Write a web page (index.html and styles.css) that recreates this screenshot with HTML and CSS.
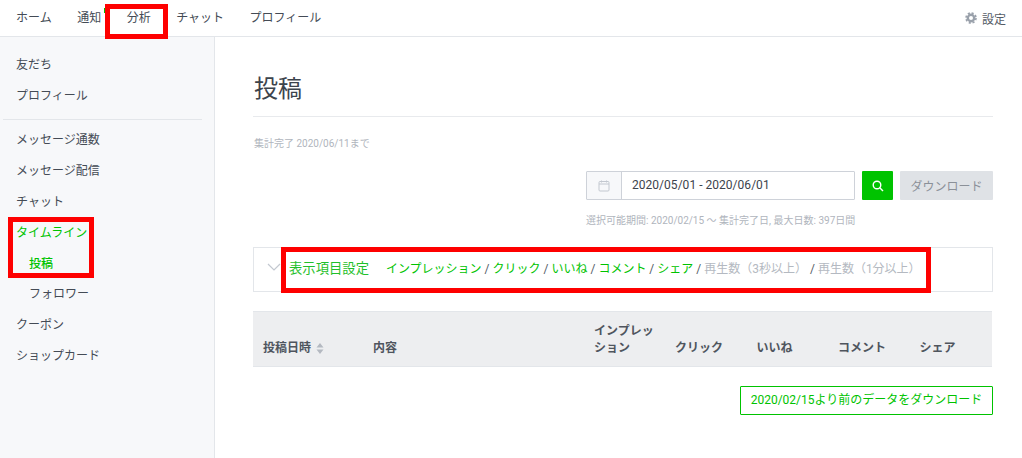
FILE: index.html
```html
<!DOCTYPE html>
<html lang="ja">
<head>
<meta charset="utf-8">
<title>投稿</title>
<link rel="stylesheet" href="styles.css">
</head>
<body>
<header class="topbar">
  <nav class="topnav">
    <a class="topnav-item">ホーム</a>
    <a class="topnav-item has-badge">通知<span class="badge"></span></a>
    <a class="topnav-item">分析</a>
    <a class="topnav-item">チャット</a>
    <a class="topnav-item">プロフィール</a>
  </nav>
  <a class="settings">
    <svg class="gear" viewBox="0 0 12 12" width="12" height="12" fill="none" stroke="#9aa1ab"><circle cx="6" cy="6" r="3.200" stroke-width="2.400"/><circle cx="6" cy="6" r="5" stroke-width="1.600" stroke-dasharray="2.130 1.797"/></svg>
    <span>設定</span>
  </a>
</header>
<div class="layout">
  <aside class="sidebar">
    <ul class="side-group side-first">
      <li class="side-item">友だち</li>
      <li class="side-item">プロフィール</li>
    </ul>
    <ul class="side-group">
      <li class="side-item">メッセージ通数</li>
      <li class="side-item">メッセージ配信</li>
      <li class="side-item">チャット</li>
      <li class="side-item active">タイムライン</li>
      <li class="side-item sub active strong">投稿</li>
      <li class="side-item sub">フォロワー</li>
      <li class="side-item">クーポン</li>
      <li class="side-item">ショップカード</li>
    </ul>
  </aside>
  <main class="main">
    <h1 class="title">投稿</h1>
    <p class="note">集計完了 2020/06/11まで</p>
    <div class="filter">
      <div class="date-group">
        <span class="date-icon">
          <svg viewBox="0 0 12 12" width="12" height="12" fill="none" stroke="#c3c8d0"><rect x="1" y="1.500" width="10" height="9.500" rx="1"/><path d="M1 4h10M3.500 .5v2M8.500 .5v2"/></svg>
        </span>
        <span class="date-value">2020/05/01 - 2020/06/01</span>
      </div>
      <button class="search-btn" aria-label="検索">
        <svg viewBox="0 0 12 12" width="12" height="12" fill="none" stroke="#fff" stroke-width="1.400"><circle cx="5" cy="5" r="3.800"/><path d="M7.800 7.800 11 11"/></svg>
      </button>
      <button class="download-btn">ダウンロード</button>
    </div>
    <p class="range">選択可能期間: 2020/02/15 〜 集計完了日, 最大日数: 397日間</p>
    <section class="columns">
      <svg class="chevron" viewBox="0 0 14 8" width="14" height="8" fill="none" stroke="#c3c8d0" stroke-width="1.200"><path d="M1 1l6 6 6-6"/></svg>
      <span class="columns-title">表示項目設定</span>
      <span class="columns-list"><span class="on">インプレッション</span> / <span class="on">クリック</span> / <span class="on">いいね</span> / <span class="on">コメント</span> / <span class="on">シェア</span> / <span class="off">再生数（3秒以上）</span> / <span class="off">再生数（1分以上）</span></span>
    </section>
    <div class="table-head">
      <div class="th th-date">投稿日時
        <svg class="sort" viewBox="0 0 8 11" width="8" height="11" fill="#b4b9c1"><path d="M4 0l3.500 4.500h-7zM4 11L.5 6.500h7z"/></svg>
      </div>
      <div class="th th-content">内容</div>
      <div class="th th-imp">インプレッション</div>
      <div class="th th-num">クリック</div>
      <div class="th th-num">いいね</div>
      <div class="th th-num">コメント</div>
      <div class="th th-num">シェア</div>
    </div>
    <div class="table-foot">
      <a class="old-data">2020/02/15より前のデータをダウンロード</a>
    </div>
  </main>
</div>
<div class="mark mark-tab"></div>
<div class="mark mark-side"></div>
<div class="mark mark-cols"></div>
</body>
</html>
```
FILE: styles.css
```css
* { box-sizing: border-box; }
html, body { height: 100%; }
body {
  margin: 0;
  position: relative;
  overflow: hidden;
  background: #fff;
  color: #444b55;
  font-family: Roboto, "Noto Sans CJK JP", sans-serif;
  font-size: 12px;
}
ul { list-style: none; margin: 0; padding: 0; }
p, h1 { margin: 0; }
.topbar {
  height: 37px;
  border-bottom: 1px solid #e3e6ea;
  display: flex;
  align-items: center;
  justify-content: space-between;
  padding: 0 16px;
}
.topnav { display: flex; gap: 25.5px; }
.topnav-item { line-height: 36px; }
.has-badge { position: relative; }
.badge {
  position: absolute;
  left: 26.500px;
  top: 8px;
  width: 6px;
  height: 5px;
  background: #00c300;
}
.settings { display: flex; align-items: center; gap: 5px; color: #555c66; }
.gear { display: block; }
.layout { display: flex; height: 421px; }
.sidebar {
  width: 215px;
  flex: none;
  background: #f7f8fa;
  border-right: 1px solid #e3e6ea;
  padding: 0 12px 0 3px;
}
.side-first { padding: 13px 0 7px; border-bottom: 1px solid #e3e6ea; }
.side-group:not(.side-first) { padding-top: 5px; }
.side-item { height: 31px; line-height: 31px; padding-left: 13px; }
.side-item.sub { padding-left: 26px; }
.side-item.strong { height: 30px; }
.active { color: #00c300; }
.strong { font-weight: 500; }
.main { flex: 1; padding: 0 29px 0 38px; min-width: 0; }
.title {
  height: 80px;
  padding: 33px 0 0 1px;
  border-bottom: 1px solid #e8eaed;
  font-size: 24px;
  font-weight: 400;
  line-height: 38px;
  color: #3c434c;
}
.note { margin-top: 20px; padding-left: 1px; font-size: 10px; line-height: 14px; color: #b0b5bd; }
.filter { display: flex; justify-content: flex-end; margin-top: 20px; }
.date-group {
  width: 269px;
  height: 29px;
  display: flex;
  border: 1px solid #ced2d9;
  border-radius: 1px;
}
.date-icon {
  width: 35px;
  display: flex;
  align-items: center;
  justify-content: center;
  background: #f7f8fa;
  border-right: 1px solid #ced2d9;
}
.date-value { padding-left: 10px; line-height: 27px; color: #3c434c; letter-spacing: .03px; }
.search-btn {
  width: 31px;
  height: 29px;
  margin-left: 7px;
  padding: 0;
  border: 0;
  border-radius: 1px;
  background: #00c300;
  display: flex;
  align-items: center;
  justify-content: center;
}
.download-btn {
  width: 93px;
  height: 29px;
  margin-left: 7px;
  padding: 0;
  border: 0;
  border-radius: 1px;
  background: #dfe2e6;
  color: #8b9098;
  font: inherit;
}
.range { margin-top: 14px; padding-left: 333px; font-size: 10px; line-height: 14px; color: #b0b5bd; white-space: nowrap; }
.columns {
  height: 45px;
  margin-top: 19px;
  border: 1px solid #e3e6ea;
  display: flex;
  align-items: center;
  padding: 0 0 5px 13px;
}
.chevron { flex: none; }
.columns-title { margin-left: 8px; color: #1fc02a; font-size: 13.33px; }
.columns-list { margin-left: 17px; color: #555c66; }
.on { color: #00c300; }
.off { color: #b4b9c1; }
.table-head {
  height: 56px;
  margin-top: 19px;
  width: 739px;
  background: #edeef0;
  border-top: 1px solid #e3e6ea;
  border-bottom: 1px solid #e3e6ea;
  display: flex;
  align-items: flex-end;
  padding: 0 0 9px 10px;
  font-weight: 700;
  line-height: 17px;
  color: #4f555e;
}
.th { flex: none; }
.th-date { width: 110px; display: flex; align-items: center; gap: 5px; }
.th-content { width: 221px; }
.th-imp { width: 81px; padding-right: 14px; }
.th-num { width: 81.5px; }
.sort { display: block; }
.table-foot { display: flex; justify-content: flex-end; margin-top: 19px; }
.old-data {
  height: 29px;
  width: 253px;
  border: 1px solid #00c300;
  border-radius: 1px;
  color: #00c300;
  line-height: 27px;
  text-align: center;
}
.mark { position: absolute; border: 5px solid #fe0000; pointer-events: none; }
.mark-tab { left: 105px; top: 4px; width: 63px; height: 35px; }
.mark-side { left: 8px; top: 217px; width: 86px; height: 61px; }
.mark-cols { left: 281px; top: 247px; width: 650px; height: 46px; }
```
